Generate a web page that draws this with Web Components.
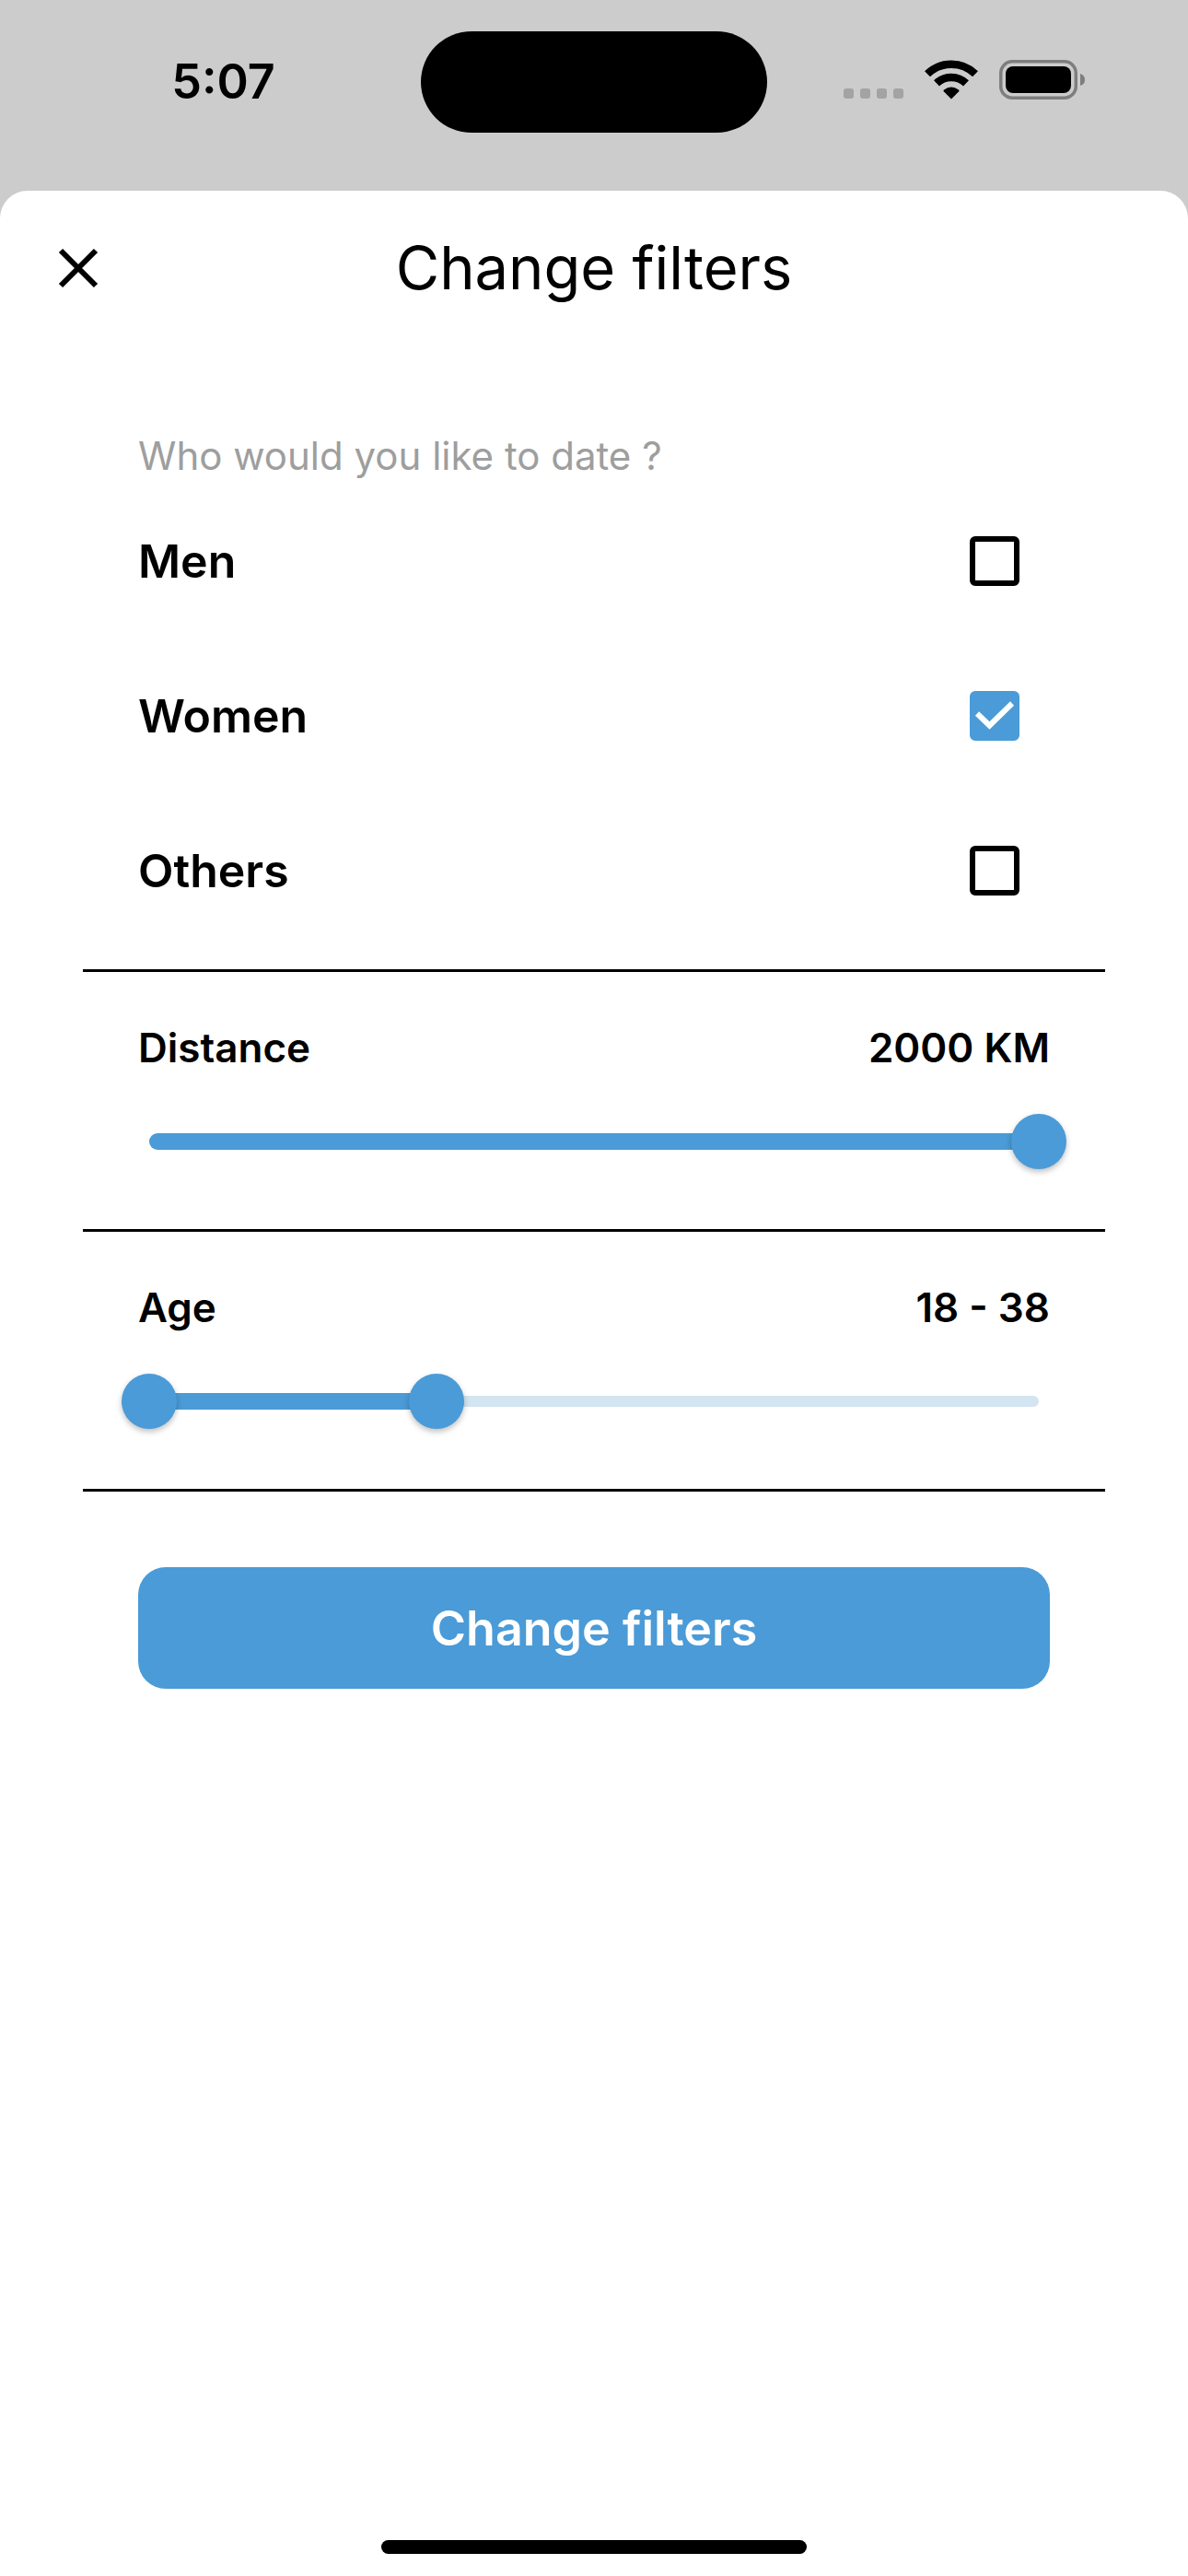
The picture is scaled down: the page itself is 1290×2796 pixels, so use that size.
<!DOCTYPE html>
<html lang="en">
<head>
<meta charset="utf-8">
<meta name="viewport" content="width=device-width, initial-scale=1">
<title>Change filters</title>
<style>
  body {
    --accent: #4a9bd7;
    --accent-soft: #d3e5f1;
    margin: 0;
    min-height: 100vh;
    display: flex;
    flex-direction: column;
    background: #ccc;
    color: #000;
    font-family: Inter, "Liberation Sans", sans-serif;
  }
  filter-sheet { flex: 1; }
</style>
</head>
<body>
<status-bar time="5:07"></status-bar>

<filter-sheet heading="Change filters">
  <check-group legend="Who would you like to date ?">
    <check-option name="men">Men</check-option>
    <check-option name="women" checked>Women</check-option>
    <check-option name="others">Others</check-option>
  </check-group>
  <range-filter label="Distance" min="1" max="2000" high="2000" unit=" KM"></range-filter>
  <range-filter label="Age" min="18" max="80" low="18" high="38"></range-filter>
  <submit-button slot="action">Change filters</submit-button>
</filter-sheet>

<script>
class StatusBar extends HTMLElement {
  connectedCallback() {
    this.attachShadow({ mode: "open" });
    this.shadowRoot.innerHTML = `
      <style>
        :host { display: grid; grid-template-columns: 1fr auto 1fr; align-items: center; padding: 34px 0 63px; }
        .time { padding-left: 28px; text-align: center; font-size: 52px; line-height: 60px; font-weight: 600; }
        .island { width: 376px; height: 110px; border-radius: 55px; background: #000; }
        .icons { display: flex; justify-content: center; align-items: flex-end; gap: 23px; padding: 0 28px 6px 0; }
        svg { display: block; }
      </style>
      <div class="time">${this.getAttribute("time")}</div>
      <div class="island"></div>
      <div class="icons">
        <svg width="65" height="43" viewBox="0 0 65 43" fill="#a3a3a3" aria-hidden="true">
          <rect x="0" y="31" width="11" height="11" rx="3"/>
          <rect x="18" y="31" width="11" height="11" rx="3"/>
          <rect x="36" y="31" width="11" height="11" rx="3"/>
          <rect x="54" y="31" width="11" height="11" rx="3"/>
        </svg>
        <svg width="58" height="43" viewBox="0 0 58 43" aria-hidden="true">
          <g fill="none" stroke="#000" stroke-width="8.5">
            <path d="M3 15.2A37.5 37.5 0 0 1 55 15.2"/>
            <path d="M13 25.4A23 23 0 0 1 45 25.4"/>
          </g>
          <path d="M29 42.5L20.8 34.2Q20 33.3 21 32.5Q29 26.5 37 32.5Q38 33.3 37.2 34.2Z"/>
        </svg>
        <svg width="94" height="43" viewBox="0 0 94 43" aria-hidden="true">
          <rect x="1.75" y="1.75" width="81.5" height="39.5" rx="12.5" fill="none" stroke="#7e7e7e" stroke-width="3.5"/>
          <rect x="7" y="7" width="71" height="29" rx="8"/>
          <path d="M88 15Q93 16.5 93 21.5Q93 26.5 88 28Z" fill="#7e7e7e"/>
        </svg>
      </div>
    `;
  }
}

class FilterSheet extends HTMLElement {
  connectedCallback() {
    this.attachShadow({ mode: "open" });
    this.shadowRoot.innerHTML = `
      <style>
        :host { display: flex; flex-direction: column; background: #fff; border-radius: 30px 30px 0 0; }
        header { display: grid; grid-template-columns: 1fr auto 1fr; align-items: center; height: 168px; padding: 0 49px; }
        button { justify-self: start; padding: 0; border: 0; background: none; width: 72px; height: 72px; cursor: pointer; }
        svg { display: block; }
        h1 { margin: 0; font-size: 65px; line-height: 84px; font-weight: 400; }
        main { flex: 1; padding: 90px 90px 0; }
        .action { padding: 82px 60px 0; }
        .home { align-self: center; width: 462px; height: 15px; margin-bottom: 24px; border-radius: 8px; background: #000; }
      </style>
      <header>
        <button type="button" aria-label="Close">
          <svg width="72" height="72" viewBox="0 0 72 72" fill="none" stroke="#000" stroke-width="6">
            <path d="M17 17L55 55M55 17L17 55"/>
          </svg>
        </button>
        <h1>${this.getAttribute("heading")}</h1>
      </header>
      <main>
        <slot></slot>
        <div class="action"><slot name="action"></slot></div>
      </main>
      <div class="home"></div>
    `;
  }
}

class CheckGroup extends HTMLElement {
  connectedCallback() {
    this.attachShadow({ mode: "open" });
    this.shadowRoot.innerHTML = `
      <style>
        :host { display: block; padding-bottom: 23px; border-bottom: 3px solid #000; }
        fieldset { margin: 0; padding: 0 60px; border: 0; min-width: 0; }
        legend { padding: 0; font-size: 42px; line-height: 60px; font-weight: 400; color: #9e9e9e; }
      </style>
      <fieldset>
        <legend>${this.getAttribute("legend")}</legend>
        <slot></slot>
      </fieldset>
    `;
  }
}

class CheckOption extends HTMLElement {
  connectedCallback() {
    this.attachShadow({ mode: "open" });
    this.shadowRoot.innerHTML = `
      <style>
        :host { display: block; }
        label { display: flex; justify-content: space-between; align-items: center; height: 168px; padding-right: 33px; font-size: 50px; font-weight: 600; cursor: pointer; }
        .box { display: grid; }
        .box > * { grid-area: 1 / 1; }
        input { appearance: none; box-sizing: border-box; width: 54px; height: 54px; margin: 0; border: 6px solid #000; border-radius: 6px; }
        input:checked { border-color: var(--accent); background: var(--accent); }
        svg { display: none; pointer-events: none; }
        input:checked + svg { display: block; }
      </style>
      <label>
        <span><slot></slot></span>
        <span class="box">
          <input type="checkbox" name="${this.getAttribute("name")}">
          <svg width="54" height="54" viewBox="0 0 54 54" fill="none" stroke="#fff" stroke-width="6" aria-hidden="true">
            <path d="M8 24.5L21.5 37.5L46 13.5"/>
          </svg>
        </span>
      </label>
    `;
    this.shadowRoot.querySelector("input").checked = this.hasAttribute("checked");
  }
}

// One thumb by default, two when a "low" attribute is given
class RangeFilter extends HTMLElement {
  connectedCallback() {
    this.attachShadow({ mode: "open" });
    this.min = Number(this.getAttribute("min"));
    this.max = Number(this.getAttribute("max"));
    this.render();
    this.shadowRoot.querySelectorAll("input").forEach((input) => {
      input.addEventListener("input", () => this.update());
    });
    this.update();
  }

  render() {
    const label = this.getAttribute("label");
    const bounds = `min="${this.min}" max="${this.max}"`;
    const low = this.hasAttribute("low")
      ? `<input id="low" type="range" ${bounds} value="${this.getAttribute("low")}" aria-label="${label} from">`
      : "";
    this.shadowRoot.innerHTML = `
      <style>
        :host { display: block; padding: 52px 60px 65px; border-bottom: 3px solid #000; }
        .head { display: flex; justify-content: space-between; margin-bottom: 42px; font-size: 44px; line-height: 60px; font-weight: 600; }
        .slider { display: grid; align-items: center; margin: 0 -18px; }
        .slider > * { grid-area: 1 / 1; }
        .track { display: grid; align-items: center; margin: 0 30px; }
        .track > * { grid-area: 1 / 1; }
        .rest { height: 12px; border-radius: 6px; background: var(--accent-soft); }
        .fill { height: 18px; border-radius: 9px; background: var(--accent); margin-left: var(--from); margin-right: var(--to); }
        input { appearance: none; width: 100%; height: 60px; margin: 0; background: none; pointer-events: none; }
        input::-webkit-slider-thumb { appearance: none; width: 60px; height: 60px; border: 0; border-radius: 50%; background: var(--accent); box-shadow: 0 3px 6px rgba(0, 0, 0, 0.25); pointer-events: auto; cursor: pointer; }
      </style>
      <div class="head">
        <label for="high">${label}</label>
        <output for="low high"></output>
      </div>
      <div class="slider">
        <div class="track"><div class="rest"></div><div class="fill"></div></div>
        ${low}
        <input id="high" type="range" ${bounds} value="${this.getAttribute("high")}">
      </div>
    `;
  }

  update() {
    const low = this.shadowRoot.getElementById("low");
    const high = this.shadowRoot.getElementById("high");
    const percent = (value) => ((value - this.min) / (this.max - this.min)) * 100;
    const fill = this.shadowRoot.querySelector(".fill");
    fill.style.setProperty("--from", `${low ? percent(low.value) : 0}%`);
    fill.style.setProperty("--to", `${100 - percent(high.value)}%`);
    this.shadowRoot.querySelector("output").textContent =
      (low ? `${low.value} - ` : "") + high.value + (this.getAttribute("unit") || "");
  }
}

class SubmitButton extends HTMLElement {
  connectedCallback() {
    this.attachShadow({ mode: "open" });
    this.shadowRoot.innerHTML = `
      <style>
        :host { display: block; }
        button { display: block; width: 100%; height: 132px; border: 0; border-radius: 30px; background: var(--accent); color: #fff; font: inherit; font-size: 52px; font-weight: 600; cursor: pointer; }
      </style>
      <button type="button"><slot></slot></button>
    `;
  }
}

customElements.define("status-bar", StatusBar);
customElements.define("filter-sheet", FilterSheet);
customElements.define("check-group", CheckGroup);
customElements.define("check-option", CheckOption);
customElements.define("range-filter", RangeFilter);
customElements.define("submit-button", SubmitButton);
</script>
</body>
</html>
